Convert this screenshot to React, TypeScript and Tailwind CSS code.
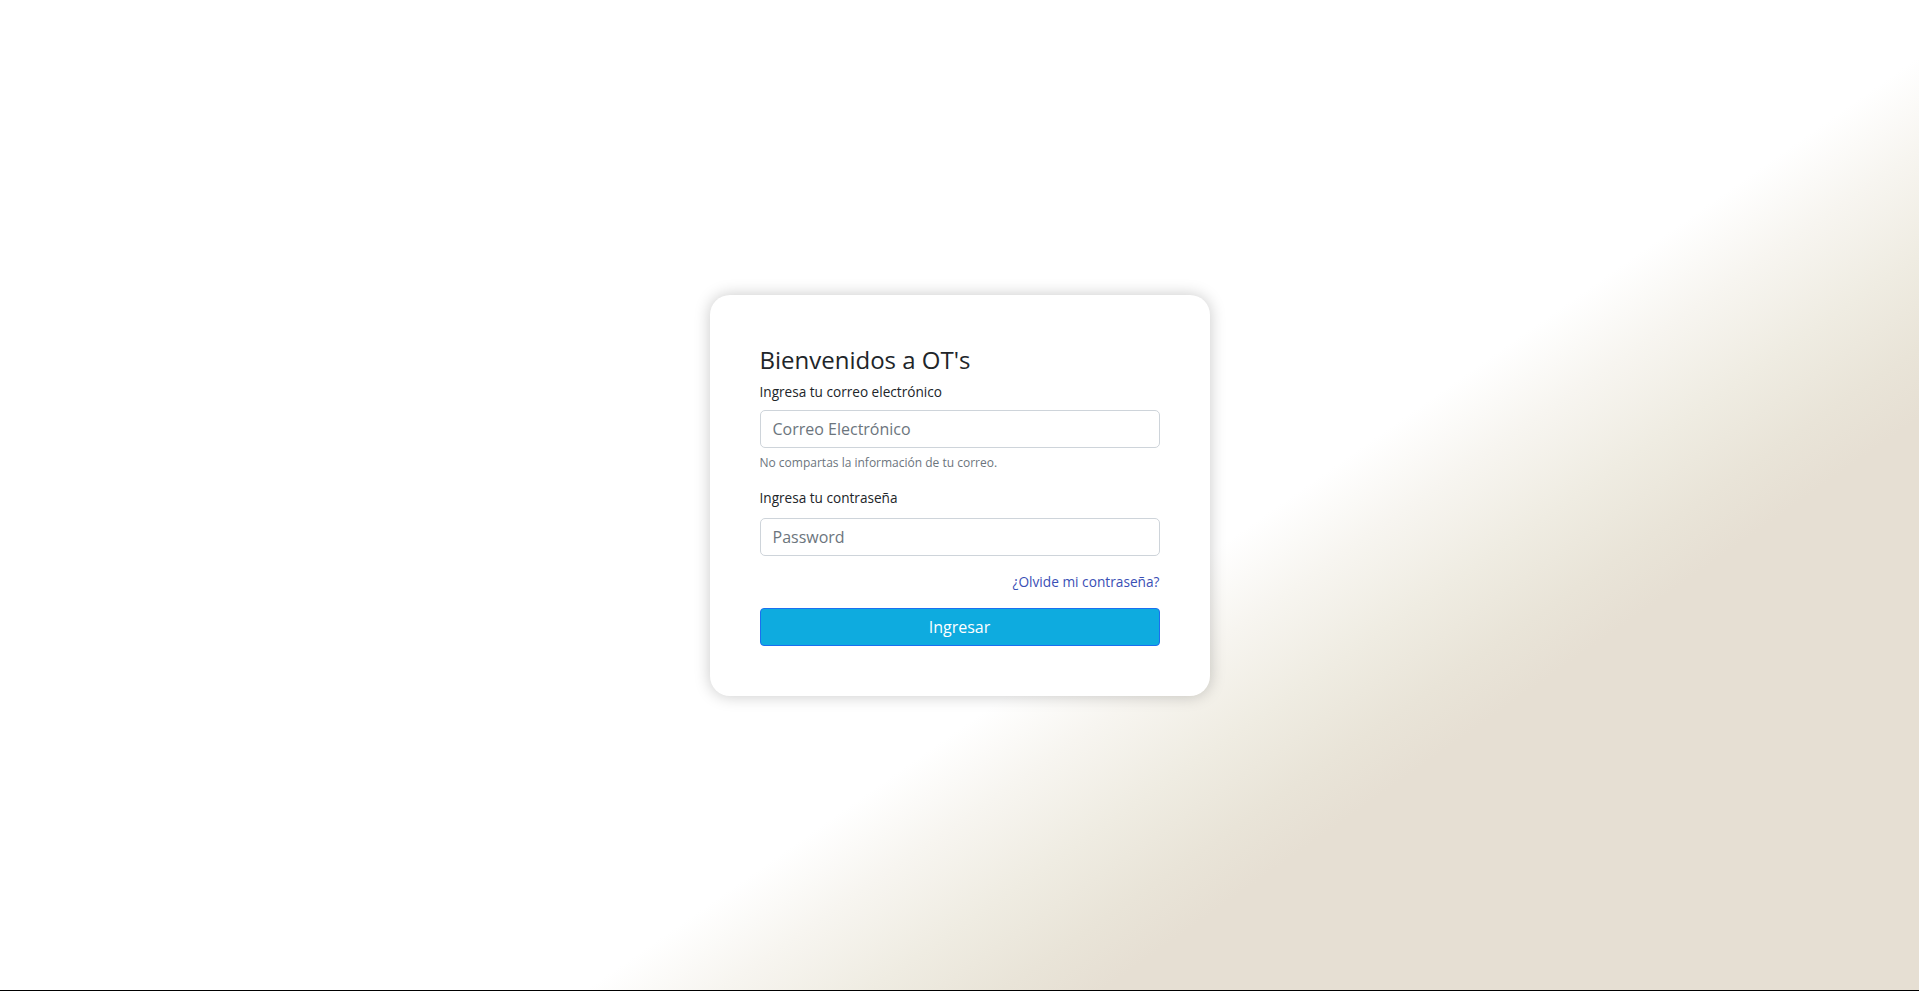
import React from "react";

export default function App() {
  return (
    <div className="min-h-[991px] bg-black" style={{ fontFamily: '"Open Sans", "Noto Sans", sans-serif' }}>
      <div className="flex h-[990px] items-center justify-center bg-white bg-[linear-gradient(145deg,#ffffff_60%,#f7f5f0_64%,#efece2_68.5%,#e9e4d8_72.5%,#e6dfd3_75.5%)]">
        <div className="w-[500px] rounded-[20px] bg-white p-[50px] shadow-[0_0_16px_rgba(0,0,0,0.22)]">
          <h4 className="text-[24px] leading-[29px] text-[#212529]">Bienvenidos a OT's</h4>
          <label className="mt-[7px] block text-[13.6px] leading-[21px] text-[#212529]">
            Ingresa tu correo electrónico
          </label>
          <input
            type="email"
            placeholder="Correo Electrónico"
            className="mt-[8px] block h-[38px] w-full rounded-[5px] border border-[#ced4da] bg-white px-3 text-[16px] text-[#495057] outline-none placeholder:text-[#6c757d]"
          />
          <small className="mt-[6px] block text-[12px] leading-[18px] text-[#6c757d]">
            No compartas la información de tu correo.
          </small>
          <label className="mt-[15px] block text-[13.6px] leading-[21px] text-[#212529]">
            Ingresa tu contraseña
          </label>
          <input
            type="password"
            placeholder="Password"
            className="mt-[10px] block h-[38px] w-full rounded-[5px] border border-[#ced4da] bg-white px-3 text-[16px] text-[#495057] outline-none placeholder:text-[#6c757d]"
          />
          <div className="mt-[15px] flex justify-end">
            <a href="#" className="text-[13.7px] leading-[21px] text-[#3a4fb5]">
              ¿Olvide mi contraseña?
            </a>
          </div>
          <button className="mt-[16px] flex h-[38px] w-full items-center justify-center rounded-[4px] border border-[#1a6ff0] bg-[#0eabdf] text-[16px] text-white">
            Ingresar
          </button>
        </div>
      </div>
    </div>
  );
}
